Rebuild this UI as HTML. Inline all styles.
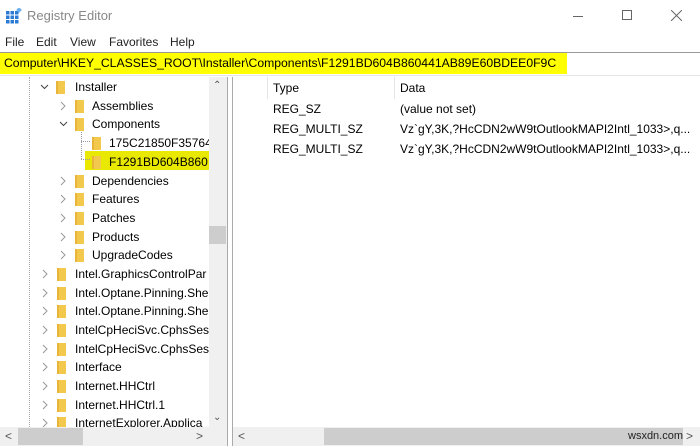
<!DOCTYPE html>
<html><head><meta charset="utf-8"><style>
*{margin:0;padding:0;box-sizing:border-box}
body{width:700px;height:446px;overflow:hidden;background:#fff;font-family:"Liberation Sans",sans-serif;font-size:12px;color:#000;position:relative}
.a{position:absolute;white-space:nowrap}
.f{position:absolute;width:9px;height:13px;background:#f2c94c;border-left:2px solid #e8b53a}
.t{position:absolute;color:#000}
</style></head><body>
<svg class="a" style="left:6px;top:8px" width="16" height="16"><g fill="#2b7bd6"><rect x="0" y="3" width="3.5" height="3.5"/><rect x="4.5" y="3" width="3.5" height="3.5"/><rect x="9" y="3" width="3.5" height="3.5"/><rect x="0" y="7.5" width="3.5" height="3.5"/><rect x="4.5" y="7.5" width="3.5" height="3.5"/><rect x="9" y="7.5" width="3.5" height="3.5"/><rect x="0" y="12" width="3.5" height="3.5"/><rect x="4.5" y="12" width="3.5" height="3.5"/><rect x="9" y="12" width="3.5" height="3.5"/></g><rect x="11" y="0" width="4" height="4" fill="#6bb0f0" transform="rotate(45 13 2)"/></svg>
<div class="a" style="left:27px;top:8px;font-size:13px;color:#888">Registry Editor</div>
<div class="a" style="left:573px;top:16px;width:10px;height:1px;background:#666"></div>
<div class="a" style="left:622px;top:10px;width:10px;height:10px;border:1px solid #666"></div>
<svg class="a" style="left:671px;top:10px" width="11" height="11"><path d="M0 0L11 11M11 0L0 11" stroke="#666" stroke-width="1"/></svg>
<div class="a" style="left:5px;top:35px;color:#222">File</div>
<div class="a" style="left:36px;top:35px;color:#222">Edit</div>
<div class="a" style="left:70px;top:35px;color:#222">View</div>
<div class="a" style="left:109px;top:35px;color:#222">Favorites</div>
<div class="a" style="left:170px;top:35px;color:#222">Help</div>
<div class="a" style="left:0;top:52px;width:700px;height:1px;background:#999"></div>
<div class="a" style="left:0;top:53px;width:567px;height:21px;background:#ffff00"></div>
<div class="a" style="left:4px;top:56px;font-size:12.2px">Computer\HKEY_CLASSES_ROOT\Installer\Components\F1291BD604B860441AB89E60BDEE0F9C</div>
<div class="a" style="left:0;top:75px;width:700px;height:1px;background:#e5e5e5"></div>
<div class="a" style="left:29px;top:77px;height:350px;border-left:1px dotted #aaa"></div>
<div class="a" style="left:85px;top:151px;width:124px;height:19px;background:#e8e800"></div>
<div class="a" style="left:81px;top:132px;height:27px;border-left:1px dotted #999"></div>
<div class="a" style="left:81px;top:141px;width:9px;border-top:1px dotted #999"></div>
<div class="a" style="left:81px;top:159px;width:9px;border-top:1px dotted #999"></div>
<div id="tree"></div>
<div class="a" style="left:209px;top:77px;width:18px;height:350px;background:#f0f0f0"></div>
<div class="a" style="left:209px;top:226px;width:17px;height:18px;background:#cdcdcd"></div>
<div class="a" style="left:213px;top:80px;font-size:10px;color:#555">&#8963;</div>
<div class="a" style="left:213px;top:412px;font-size:10px;color:#555">&#8964;</div>
<div class="a" style="left:227px;top:77px;width:1px;height:369px;background:#aaa"></div>
<div class="a" style="left:232px;top:77px;width:1px;height:369px;background:#aaa"></div>
<div class="a" style="left:0;top:427px;width:227px;height:19px;background:#f0f0f0"></div>
<div class="a" style="left:18px;top:428px;width:65px;height:17px;background:#cdcdcd"></div>
<div class="a" style="left:5px;top:429px;color:#555">&lt;</div>
<div class="a" style="left:196px;top:429px;color:#555">&gt;</div>
<div class="a" style="left:233px;top:427px;width:467px;height:19px;background:#f0f0f0"></div>
<div class="a" style="left:324px;top:428px;width:359px;height:17px;background:#cdcdcd"></div>
<div class="a" style="left:238px;top:429px;color:#555">&lt;</div>
<div class="a" style="left:628px;top:430px;font-size:11px;color:#222">wsxdn.com</div>
<div class="a" style="left:686px;top:429px;color:#555">&gt;</div>
<div class="a" style="left:267px;top:77px;width:1px;height:22px;background:#e5e5e5"></div>
<div class="a" style="left:394px;top:77px;width:1px;height:22px;background:#e5e5e5"></div>
<div class="a" style="left:273px;top:81px">Type</div>
<div class="a" style="left:400px;top:81px">Data</div>
<div class="a" style="left:273px;top:102px">REG_SZ</div>
<div class="a" style="left:400px;top:102px">(value not set)</div>
<div class="a" style="left:273px;top:122px">REG_MULTI_SZ</div>
<div class="a" style="left:400px;top:122px">Vz`gY,3K,?HcCDN2wW9tOutlookMAPI2Intl_1033&gt;,q...</div>
<div class="a" style="left:273px;top:142px">REG_MULTI_SZ</div>
<div class="a" style="left:400px;top:142px">Vz`gY,3K,?HcCDN2wW9tOutlookMAPI2Intl_1033&gt;,q...</div>
<script>
var rows=[
[78,'v',40,56,75,'Installer'],
[97,'>',59,75,92,'Assemblies'],
[115,'v',59,75,92,'Components'],
[134,'',0,92,109,'175C21850F35764'],
[153,'',0,92,109,'F1291BD604B860'],
[172,'>',59,75,92,'Dependencies'],
[190,'>',59,75,92,'Features'],
[209,'>',59,75,92,'Patches'],
[228,'>',59,75,92,'Products'],
[246,'>',59,75,92,'UpgradeCodes'],
[265,'>',41,57,75,'Intel.GraphicsControlPar'],
[284,'>',41,57,75,'Intel.Optane.Pinning.She'],
[302,'>',41,57,75,'Intel.Optane.Pinning.She'],
[321,'>',41,57,75,'IntelCpHeciSvc.CphsSes'],
[340,'>',41,57,75,'IntelCpHeciSvc.CphsSes'],
[358,'>',41,57,75,'Interface'],
[377,'>',41,57,75,'Internet.HHCtrl'],
[396,'>',41,57,75,'Internet.HHCtrl.1'],
[414,'>',41,57,75,'InternetExplorer.Applica']];
var h='';rows.forEach(function(r){
if(r[1]=='v')h+='<svg class="a" style="left:'+r[2]+'px;top:'+(r[0]+6)+'px" width="9" height="6"><path d="M1 1L4.5 4.5L8 1" stroke="#444" fill="none"/></svg>';
if(r[1]=='>')h+='<svg class="a" style="left:'+(r[2]+1)+'px;top:'+(r[0]+4)+'px" width="6" height="10"><path d="M1 1L5 5L1 9" stroke="#999" fill="none"/></svg>';
h+='<div class="f" style="left:'+r[3]+'px;top:'+(r[0]+3)+'px"></div>';
h+='<div class="t" style="left:'+r[4]+'px;top:'+(r[0]+2)+'px;white-space:nowrap;width:'+(209-r[4])+'px;overflow:hidden">'+r[5]+'</div>';});
document.getElementById('tree').innerHTML=h;
</script>
</body></html>
